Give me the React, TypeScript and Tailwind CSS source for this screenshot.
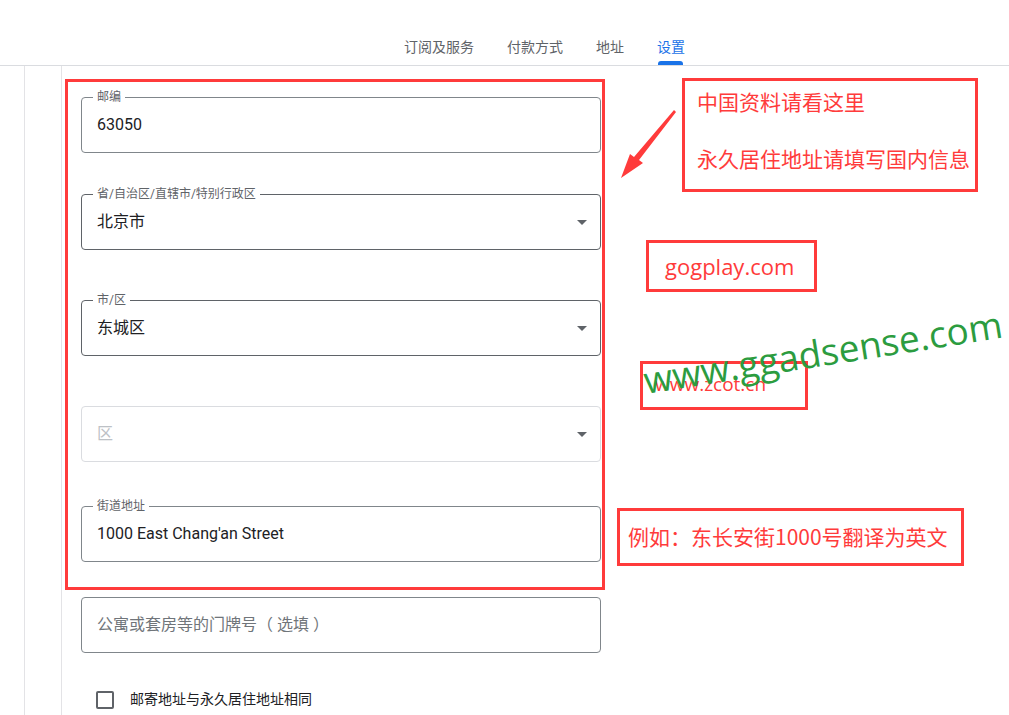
import React from "react";

const FONT = "font-['Roboto','Noto_Sans_CJK_SC',sans-serif]";
const NOTE = "font-['Noto_Sans_CJK_SC','Noto_Sans',sans-serif]";

function Caret() {
  return (
    <svg width="10" height="5" viewBox="0 0 10 5" className="shrink-0">
      <path d="M0 0h10L5 5z" fill="#5f6368" />
    </svg>
  );
}

interface FieldProps {
  label?: string;
  value?: string;
  placeholder?: string;
  select?: boolean;
  dark?: boolean;
  disabled?: boolean;
  className?: string;
}

function Field({ label, value, placeholder, select, dark, disabled, className }: FieldProps) {
  const border = disabled ? "border-[#dadce0]" : dark ? "border-[#5f6368]" : "border-[#80868b]";
  return (
    <div
      className={`relative h-[56px] w-[520px] rounded-[4px] border ${border} flex items-center pl-[15px] pr-[13px] ${className ?? ""}`}
    >
      {label && (
        <span className="absolute left-[11px] top-[-9px] bg-white px-[4px] text-[12px] leading-[16px] text-[#5f6368]">
          {label}
        </span>
      )}
      <span
        className={`flex-1 text-[16px] ${
          value ? "text-[#202124]" : disabled ? "text-[#bdc1c6]" : "text-[#70757a]"
        }`}
      >
        {value ?? placeholder}
      </span>
      {select && <Caret />}
    </div>
  );
}

function Tabs() {
  const tabs = ["订阅及服务", "付款方式", "地址", "设置"];
  return (
    <div className="h-[66px] border-b border-[#dadce0] flex items-end pl-[404px] gap-[33px]">
      {tabs.map((t, i) => (
        <div key={t} className="relative h-[29px] flex items-start">
          <span className={`text-[14px] leading-[22px] ${i === 3 ? "text-[#1a73e8]" : "text-[#5f6368]"}`}>{t}</span>
          {i === 3 && (
            <span className="absolute bottom-0 left-[1px] right-[2px] h-[4px] rounded-t-[3px] bg-[#1a73e8]" />
          )}
        </div>
      ))}
    </div>
  );
}

function Annotations() {
  return (
    <div className={`pointer-events-none absolute inset-0 ${NOTE}`}>
      {/* note box */}
      <div className="absolute left-[682px] top-[78px] w-[296px] h-[114px] border-[3px] border-[#ff3b3b] pl-[12px] pt-[6px] text-[21px] leading-[28px] text-[#ff3b3b]">
        <div>中国资料请看这里</div>
        <div className="mt-[29px]">永久居住地址请填写国内信息</div>
      </div>
      {/* arrow */}
      <svg className="absolute left-[612px] top-[105px]" width="72" height="80" viewBox="0 0 72 80">
        <path d="M64 7 L27 55 L31 58 L9 73 L18 49 L22 52 L62 5 Z" fill="#ff3b3b" />
      </svg>
      <div className="absolute left-[646px] top-[240px] w-[171px] h-[52px] border-[3px] border-[#ff3b3b] pl-[16px] pt-[9px] text-[22px] leading-[28px] text-[#ff3b3b] font-['Open_Sans',sans-serif]">
        gogplay.com
      </div>
      <div className="absolute left-[640px] top-[361px] w-[168px] h-[49px] border-[3px] border-[#ff3b3b] pl-[12px] pt-[7px] text-[19px] leading-[26px] text-[#ff3b3b] font-['Open_Sans',sans-serif]">
        www.zcot.cn
      </div>
      <div className="absolute left-[647px] top-[360px] origin-bottom-left rotate-[-9deg] text-[37px] leading-[40px] text-[#2c9c3f] font-['Open_Sans',sans-serif] whitespace-nowrap">
        www.ggadsense.com
      </div>
      <div className="absolute left-[617px] top-[508px] w-[347px] h-[58px] border-[3px] border-[#ff3b3b] pl-[8px] pt-[11px] text-[21px] leading-[28px] text-[#ff3b3b]">
        例如：东长安街1000号翻译为英文
      </div>
    </div>
  );
}

export default function App() {
  return (
    <div className={`relative w-[1009px] h-[715px] overflow-hidden bg-white ${FONT}`}>
      <Tabs />
      <div className="flex h-[649px]">
        <div className="w-[25px] border-r border-[#e3e3e6]" />
        <div className="w-[37px] border-r border-[#e3e3e6]" />
        <div className="flex flex-col pl-[3px] pt-[13px]">
          <div className="w-[540px] border-[3px] border-[#ff3b3b] pl-[13px] pt-[15px] pb-[25px] flex flex-col">
            <Field label="邮编" value="63050" />
            <Field label="省/自治区/直辖市/特别行政区" value="北京市" select dark className="mt-[41px]" />
            <Field label="市/区" value="东城区" select dark className="mt-[50px]" />
            <Field placeholder="区" select disabled className="mt-[50px]" />
            <Field label="街道地址" value="1000 East Chang'an Street" className="mt-[44px]" />
          </div>
          <Field placeholder="公寓或套房等的门牌号（ 选填 ）" className="ml-[16px] mt-[7px]" />
          <label className="ml-[31px] mt-[36px] flex items-center gap-[16px]">
            <span className="h-[18px] w-[18px] rounded-[2px] border-2 border-[#5f6368]" />
            <span className="text-[14px] text-[#202124]">邮寄地址与永久居住地址相同</span>
          </label>
        </div>
      </div>
      <Annotations />
    </div>
  );
}
